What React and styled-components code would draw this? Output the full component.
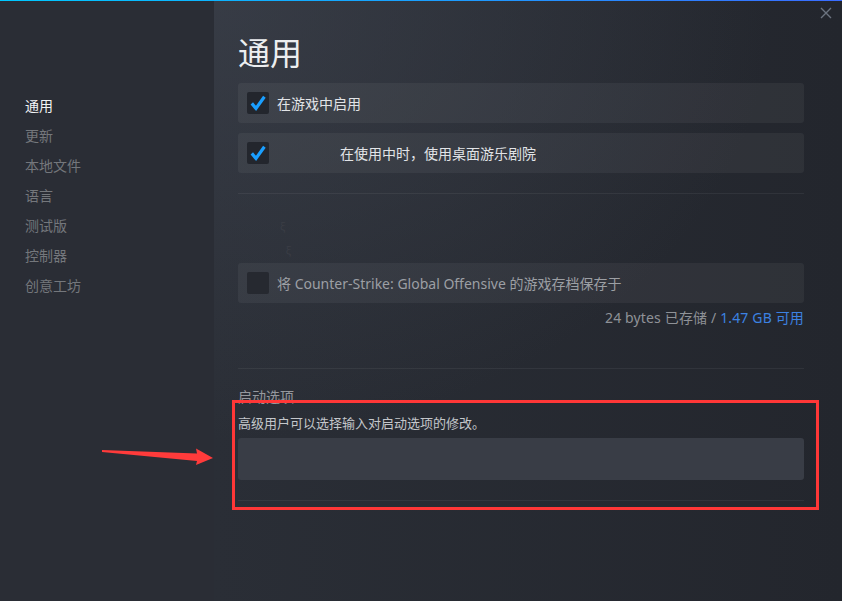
import React from "react";
import styled, { createGlobalStyle } from "styled-components";

const Global = createGlobalStyle`
  html, body { margin: 0; padding: 0; background: #24272f; }
  * { box-sizing: border-box; }
`;

const FONT = `"Noto Sans", "Noto Sans CJK SC", sans-serif`;

const Page = styled.div`
  position: relative;
  width: 842px;
  height: 601px;
  overflow: hidden;
  display: flex;
  font-family: ${FONT};
  background: #24272f;
`;

const TopLine = styled.div`
  position: absolute;
  z-index: 5;
  left: 0;
  top: 0;
  width: 100%;
  height: 1px;
  background: linear-gradient(90deg, #00c8ff 0%, #1aa0ff 50%, #3a6cff 100%);
`;

const Sidebar = styled.nav`
  width: 214px;
  flex: none;
  background: #2a2d35;
  padding: 91px 0 0 25px;
  display: flex;
  flex-direction: column;
`;

const NavItem = styled.div`
  height: 30px;
  line-height: 30px;
  font-size: 14px;
  color: ${(p) => (p.$active ? "#f2f3f5" : "#74777c")};
`;

const Main = styled.main`
  position: relative;
  flex: 1;
  padding: 31px 38px 0 24px;
  display: flex;
  flex-direction: column;
  background:
    radial-gradient(ellipse 560px 440px at 0% 0%, rgba(64, 69, 80, 0.6), rgba(64, 69, 80, 0) 100%),
    linear-gradient(90deg, #2a2e36 0%, #23262d 100%);
`;

const Close = styled.button`
  position: absolute;
  right: 10px;
  top: 7px;
  width: 12px;
  height: 12px;
  padding: 0;
  border: 0;
  background: none;
  display: flex;
`;

const Title = styled.h1`
  margin: 0 0 12px;
  height: 40px;
  line-height: 40px;
  font-size: 32px;
  font-weight: 400;
  color: #eceef0;
  font-family: "Noto Sans CJK SC", sans-serif;
`;

const Row = styled.div`
  height: 40px;
  margin-top: ${(p) => p.$mt || 0}px;
  padding: 0 9px;
  display: flex;
  align-items: center;
  gap: 8px;
  border-radius: 3px;
  background: rgba(255, 255, 255, 0.05);
  font-size: 14px;
  color: ${(p) => (p.$dim ? "#9c9fa4" : "#e2e4e7")};
  white-space: nowrap;
`;

const Box = styled.span`
  width: 22px;
  height: 22px;
  flex: none;
  border-radius: 2px;
  background: ${(p) => (p.$checked ? "#23262d" : "#262930")};
  display: flex;
  align-items: center;
  justify-content: center;
`;

const Erased = styled.span`
  width: 55px;
  flex: none;
`;

const Divider = styled.div`
  height: 1px;
  margin-top: ${(p) => p.$mt}px;
  background: rgba(255, 255, 255, 0.06);
`;

const Ghost = styled.div`
  height: 69px;
  font-size: 11px;
  color: #3a3d45;
  padding: 20px 0 0 42px;
  line-height: 24px;
`;

const Storage = styled.div`
  margin-top: 7px;
  line-height: 16px;
  text-align: right;
  font-size: 14px;
  letter-spacing: 0.15px;
  color: #8f9297;
`;

const Blue = styled.span`
  color: #3c82e2;
`;

const Label = styled.div`
  margin-top: 18px;
  line-height: 20px;
  font-size: 14px;
  color: #95989d;
`;

const Hint = styled.div`
  margin-top: 7px;
  line-height: 18px;
  font-size: 13px;
  color: #c4c7cb;
`;

const Input = styled.input`
  margin-top: 6px;
  height: 42px;
  border: 0;
  border-radius: 3px;
  background: #393d46;
  outline: none;
  padding: 0 10px;
  color: #e2e4e7;
  font-family: ${FONT};
`;

const Annotation = styled.div`
  position: absolute;
  left: 232px;
  top: 400px;
  width: 587px;
  height: 110px;
  border: 3px solid #ff3737;
  pointer-events: none;
`;

const Arrow = styled.svg`
  position: absolute;
  left: 0;
  top: 0;
  pointer-events: none;
`;

const Check = () => (
  <svg width="18" height="18" viewBox="0 0 18 18">
    <path d="M2.8 9.4 L7 14.4 L15.4 2.8" fill="none" stroke="#1a9fff" strokeWidth="3.2" strokeLinejoin="miter" />
  </svg>
);

const nav = ["通用", "更新", "本地文件", "语言", "测试版", "控制器", "创意工坊"];

export default function App() {
  return (
    <>
      <Global />
      <Page>
        <TopLine />
        <Sidebar>
          {nav.map((n, i) => (
            <NavItem key={n} $active={i === 0}>{n}</NavItem>
          ))}
        </Sidebar>
        <Main>
          <Close aria-label="关闭">
            <svg width="12" height="12" viewBox="0 0 12 12">
              <path d="M1 1 L11 11 M11 1 L1 11" stroke="#6c7480" strokeWidth="1.4" />
            </svg>
          </Close>
          <Title>通用</Title>
          <Row>
            <Box $checked><Check /></Box>
            在游戏中启用
          </Row>
          <Row $mt={10}>
            <Box $checked><Check /></Box>
            <Erased />
            在使用中时，使用桌面游乐剧院
          </Row>
          <Divider $mt={20} />
          <Ghost>ξ<br />&nbsp;&nbsp;ξ</Ghost>
          <Row $dim>
            <Box />
            将 Counter-Strike: Global Offensive 的游戏存档保存于
          </Row>
          <Storage>
            24 bytes 已存储 / <Blue>1.47 GB 可用</Blue>
          </Storage>
          <Divider $mt={42} />
          <Label>启动选项</Label>
          <Hint>高级用户可以选择输入对启动选项的修改。</Hint>
          <Input aria-label="启动选项" />
          <Divider $mt={20} />
        </Main>
        <Annotation />
        <Arrow width="842" height="601" viewBox="0 0 842 601">
          <polygon
            points="102,450 197,453.5 196,448.5 213,458 196,465 197,461 102,452"
            fill="#ff3b3b"
          />
        </Arrow>
      </Page>
    </>
  );
}
